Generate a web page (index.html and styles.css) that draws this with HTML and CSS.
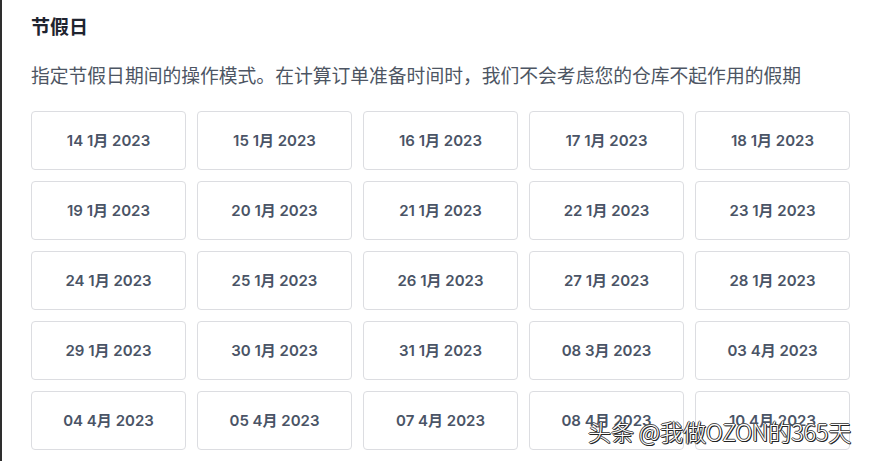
FILE: index.html
```html
<!DOCTYPE html>
<html lang="zh">
<head>
<meta charset="utf-8">
<link rel="stylesheet" href="styles.css">
</head>
<body>
<div class="frame">
  <section class="panel">
    <h2 class="title">节假日</h2>
    <p class="desc">指定节假日期间的操作模式。在计算订单准备时间时，我们不会考虑您的仓库不起作用的假期</p>
    <div class="grid">
      <div class="day">14 1月 2023</div>
      <div class="day">15 1月 2023</div>
      <div class="day">16 1月 2023</div>
      <div class="day">17 1月 2023</div>
      <div class="day">18 1月 2023</div>
      <div class="day">19 1月 2023</div>
      <div class="day">20 1月 2023</div>
      <div class="day">21 1月 2023</div>
      <div class="day">22 1月 2023</div>
      <div class="day">23 1月 2023</div>
      <div class="day">24 1月 2023</div>
      <div class="day">25 1月 2023</div>
      <div class="day">26 1月 2023</div>
      <div class="day">27 1月 2023</div>
      <div class="day">28 1月 2023</div>
      <div class="day">29 1月 2023</div>
      <div class="day">30 1月 2023</div>
      <div class="day">31 1月 2023</div>
      <div class="day">08 3月 2023</div>
      <div class="day">03 4月 2023</div>
      <div class="day">04 4月 2023</div>
      <div class="day">05 4月 2023</div>
      <div class="day">07 4月 2023</div>
      <div class="day">08 4月 2023</div>
      <div class="day">10 4月 2023</div>
    </div>
  </section>
  <div class="watermark">头条 @我做OZON的365天</div>
</div>
</body>
</html>
```
FILE: styles.css
```css
html, body {
  margin: 0;
  padding: 0;
  background: #ffffff;
  height: 100%;
  overflow: hidden;
}
.frame {
  position: relative;
  height: 461px;
  border-left: 2px solid #2e2e2e;
  box-sizing: border-box;
  font-family: Inter, "Noto Sans CJK SC", sans-serif;
}
.panel {
  padding: 14px 28px 0 29px;
}
.title {
  margin: 0;
  font-size: 19px;
  line-height: 28px;
  font-weight: 700;
  color: #1f2430;
}
.desc {
  margin: 21px 0 0;
  font-size: 18.8px;
  line-height: 28px;
  color: #4d5563;
}
.grid {
  margin-top: 20px;
  display: grid;
  grid-template-columns: repeat(5, 1fr);
  column-gap: 11px;
  row-gap: 11px;
}
.day {
  height: 59px;
  box-sizing: border-box;
  border: 1px solid #dcdde1;
  border-radius: 4px;
  display: flex;
  align-items: center;
  justify-content: center;
  padding-bottom: 3px;
  font-size: 15px;
  font-weight: 600;
  color: #4a5466;
}
.watermark {
  position: absolute;
  left: 586px;
  top: 415px;
  font-size: 23px;
  line-height: 32px;
  color: #ffffff;
  font-family: "Noto Sans CJK SC", sans-serif;
  font-weight: 300;
  text-shadow: 1px 1px 0 #222, -1px 0 0 #333, 0 -1px 0 #555, 1px 0 0 #333, 0 1px 0 #333;
}
```
